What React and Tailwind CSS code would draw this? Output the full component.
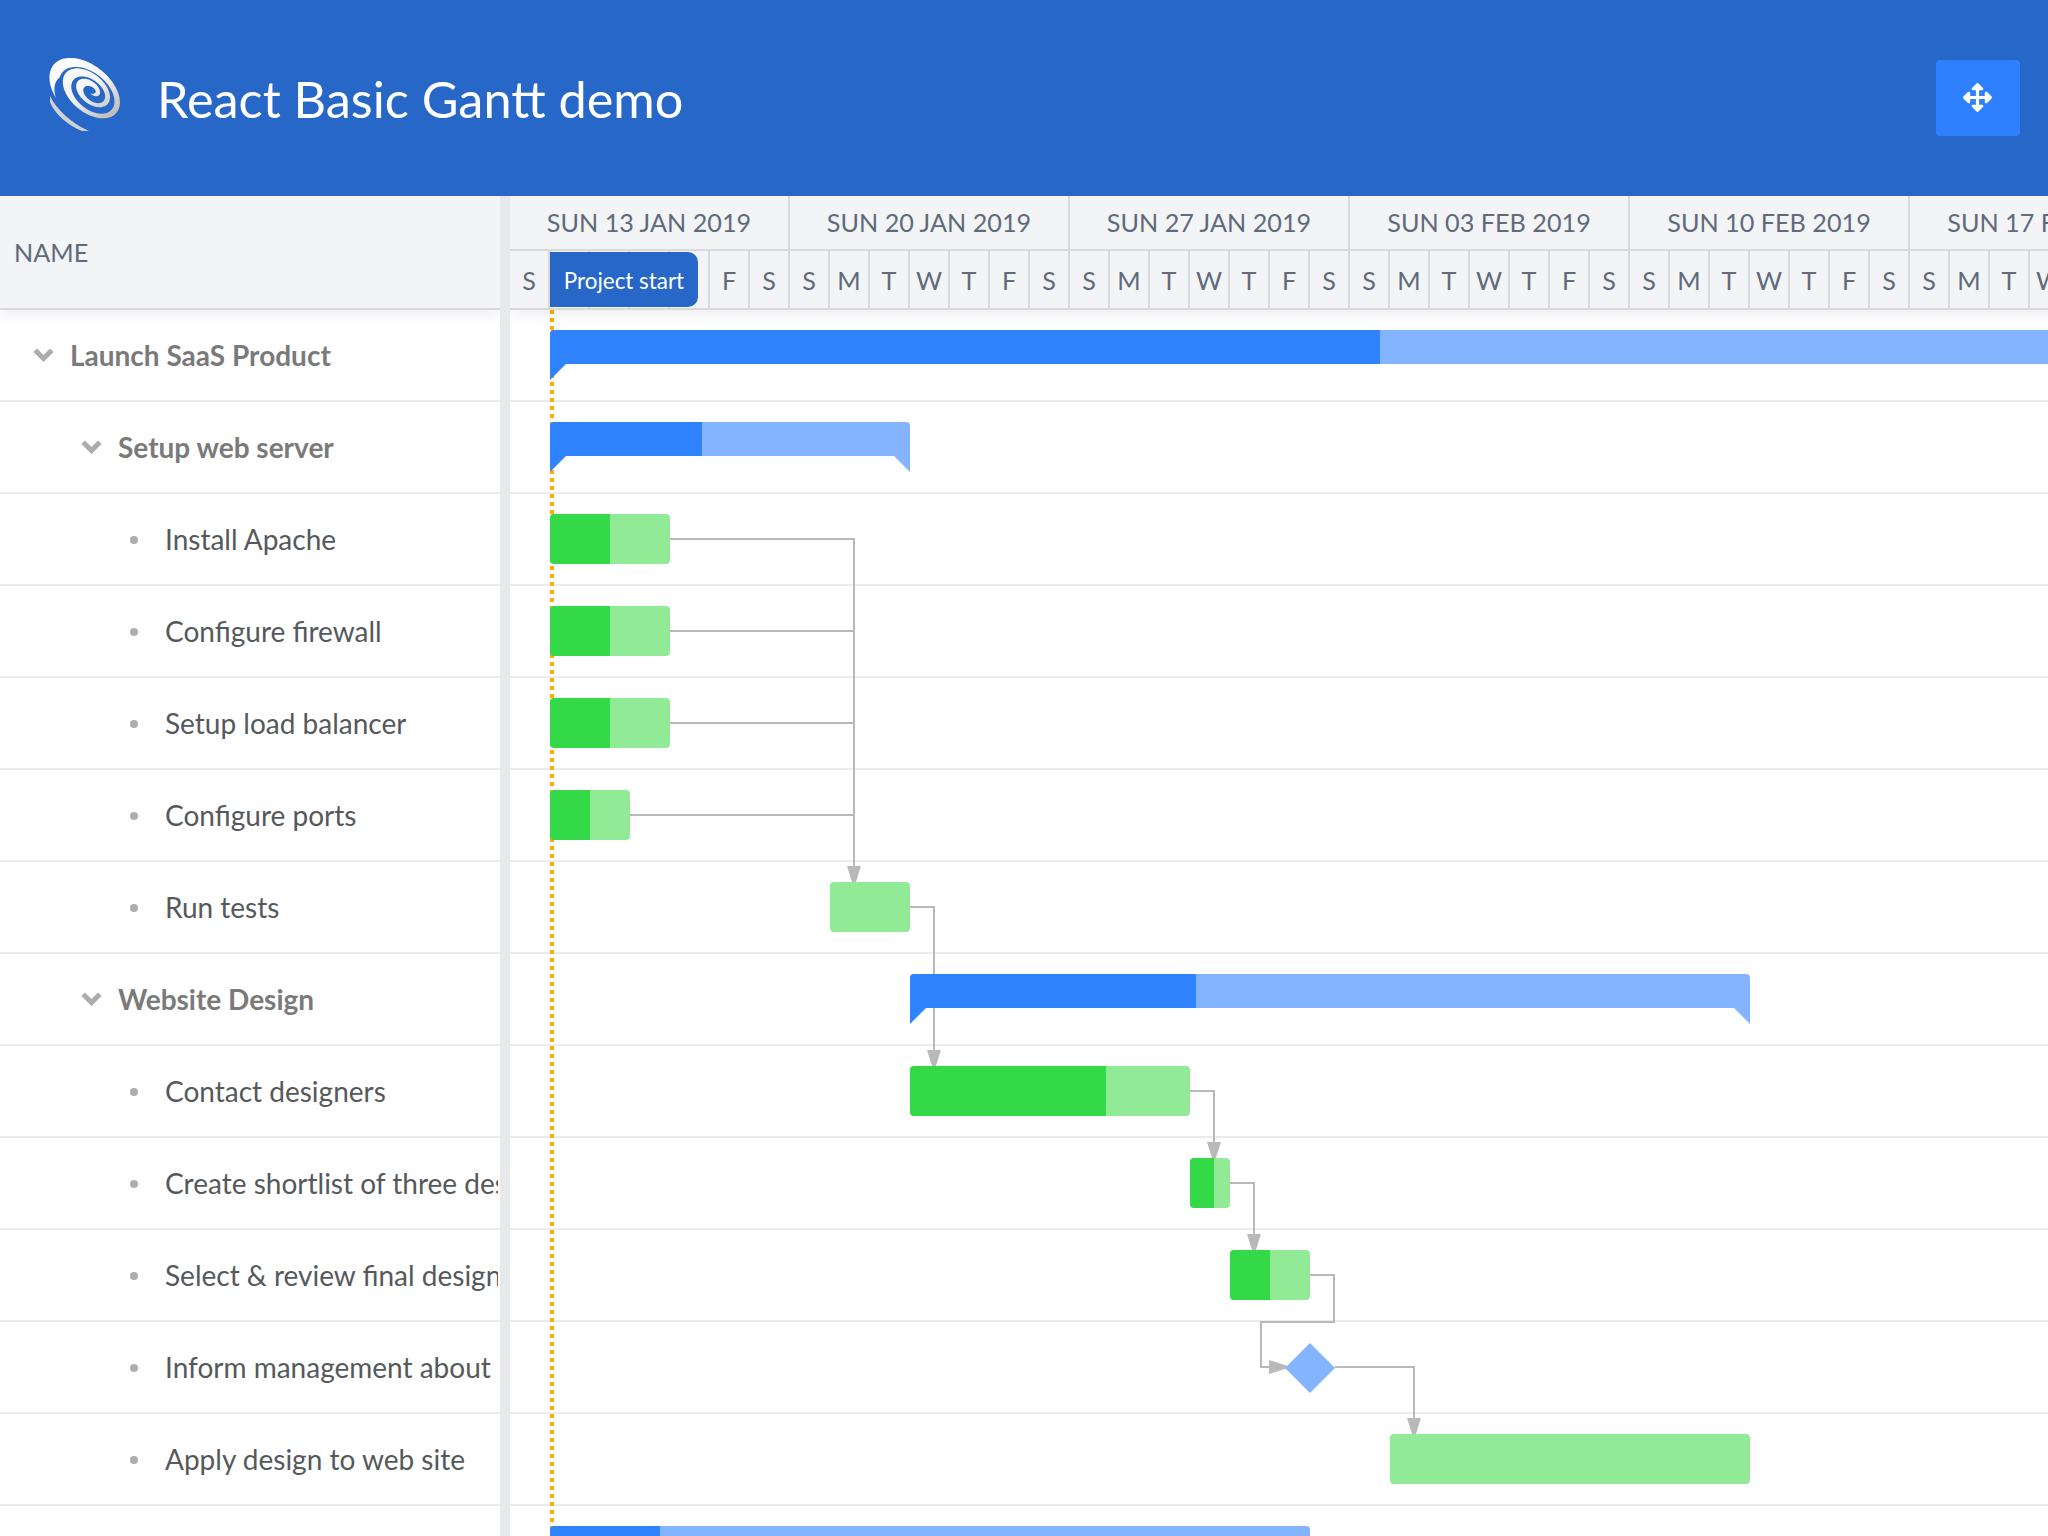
import React from "react";
import { FaArrowsAlt } from "react-icons/fa";

const weeks = ["SUN 13 JAN 2019", "SUN 20 JAN 2019", "SUN 27 JAN 2019", "SUN 03 FEB 2019", "SUN 10 FEB 2019", "SUN 17 FEB 2019"];
const dayNames = ["S", "M", "T", "W", "T", "F", "S"];

const rows = [
  { name: "Launch SaaS Product", level: 0, group: true, bar: { kind: "summary", from: 550, to: 2300, done: 1380 } },
  { name: "Setup web server", level: 1, group: true, bar: { kind: "summary", from: 550, to: 910, done: 702 } },
  { name: "Install Apache", level: 2, bar: { kind: "task", from: 550, to: 670, done: 610 } },
  { name: "Configure firewall", level: 2, bar: { kind: "task", from: 550, to: 670, done: 610 } },
  { name: "Setup load balancer", level: 2, bar: { kind: "task", from: 550, to: 670, done: 610 } },
  { name: "Configure ports", level: 2, bar: { kind: "task", from: 550, to: 630, done: 590 } },
  { name: "Run tests", level: 2, bar: { kind: "task", from: 830, to: 910, done: 830 } },
  { name: "Website Design", level: 1, group: true, bar: { kind: "summary", from: 910, to: 1750, done: 1196 } },
  { name: "Contact designers", level: 2, bar: { kind: "task", from: 910, to: 1190, done: 1106 } },
  { name: "Create shortlist of three designers", level: 2, bar: { kind: "task", from: 1190, to: 1230, done: 1214 } },
  { name: "Select & review final designs", level: 2, bar: { kind: "task", from: 1230, to: 1310, done: 1270 } },
  { name: "Inform management about decision", level: 2, bar: { kind: "milestone", at: 1310 } },
  { name: "Apply design to web site", level: 2, bar: { kind: "task", from: 1390, to: 1750, done: 1390 } },
  { name: "Get CMS licenses", level: 1, group: true, bar: { kind: "summary", from: 550, to: 1310, done: 660 } },
];

const X0 = 510;

function spiralPoints() {
  const a = 45;
  const b = 28;
  const rot = (40 * Math.PI) / 180;
  const turns = 2.9;
  const n = 320;
  const start = 0.32;
  const pt = (t, r) => {
    const th = (start + t) * Math.PI * 2;
    const cx = 42 + 5 * (t / turns);
    const cy = 36 - 1 * (t / turns);
    const x = a * r * Math.cos(th);
    const y = b * r * Math.sin(th);
    return [cx + x * Math.cos(rot) - y * Math.sin(rot), cy + x * Math.sin(rot) + y * Math.cos(rot)];
  };
  const outer = [];
  const inner = [];
  for (let i = 0; i <= n; i++) {
    const t = (i / n) * turns;
    const ro = 1 - 0.3 * t;
    const th = (start + t) * Math.PI * 2;
    const thick = 0.2 + 0.065 * Math.cos(th - Math.PI * 1.05);
    const taperIn = Math.min(1, t / 0.12);
    const taperOut = Math.min(1, (turns - t) / 0.2);
    const w = thick * taperIn * taperOut * (1 - 0.1 * t);
    outer.push(pt(t, ro));
    inner.push(pt(t, ro - w));
  }
  return [...outer, ...inner.reverse()].map((p) => p[0].toFixed(2) + "," + p[1].toFixed(2)).join(" ");
}

function Logo() {
  return (
    <svg width="85" height="80" viewBox="0 0 85 80" className="shrink-0 -mt-[6px]">
      <defs>
        <linearGradient id="lg" x1="0.1" y1="0.05" x2="0.85" y2="0.95">
          <stop offset="0" stopColor="#ffffff" />
          <stop offset="0.55" stopColor="#f4f4f4" />
          <stop offset="1" stopColor="#bfbfbf" />
        </linearGradient>
      </defs>
      <polygon points={spiralPoints()} fill="url(#lg)" />
      <path d="M5 41 C12 55 26 68 44 76 L37 76 C22 70 9 58 5 47 Z" fill="#d2d2d2" />
    </svg>
  );
}

function Chevron() {
  return (
    <svg width="21" height="14" viewBox="0 0 21 14" fill="none" className="shrink-0 text-[#adadad]">
      <path d="M2.2 2.2 L10.5 10.5 L18.8 2.2" stroke="currentColor" strokeWidth="5" />
    </svg>
  );
}

function TreeRow({ row }) {
  const pad = row.group ? (row.level === 0 ? "pl-[33px]" : "pl-[81px]") : "pl-[130px]";
  return (
    <div className={`h-[92px] border-b-2 border-[#ebebeb] flex items-center ${pad} pr-[2px]`}>
      {row.group ? (
        <>
          <Chevron />
          <span className="ml-[16px] text-[28px] font-bold text-[#7a7a7a] whitespace-nowrap overflow-hidden">{row.name}</span>
        </>
      ) : (
        <>
          <span className="w-[8px] h-[8px] rounded-full bg-[#aeaeae] shrink-0 mt-[1px]" />
          <span className="ml-[27px] text-[28px] text-[#55595c] whitespace-nowrap overflow-hidden">{row.name}</span>
        </>
      )}
    </div>
  );
}

function Bar({ bar }) {
  if (bar.kind === "milestone") {
    return (
      <div
        className="absolute top-[21px] w-[50px] h-[50px] bg-[#84b4ff] z-10 [clip-path:polygon(50%_0,100%_50%,50%_100%,0_50%)]"
        style={{ left: bar.at - X0 - 25 }}
      />
    );
  }
  const width = bar.to - bar.from;
  const done = bar.done - bar.from;
  if (bar.kind === "summary") {
    return (
      <div className="absolute top-[20px] z-10" style={{ left: bar.from - X0, width }}>
        <div className="flex h-[34px] rounded-t-[4px] overflow-hidden bg-[#84b4ff]">
          <div className="h-full bg-[#3083ff]" style={{ width: done }} />
        </div>
        <div className="flex justify-between">
          <div className="w-[16px] h-[16px] bg-[#3083ff] [clip-path:polygon(0_0,100%_0,0_100%)]" />
          <div className="w-[16px] h-[16px] bg-[#84b4ff] [clip-path:polygon(0_0,100%_0,100%_100%)]" />
        </div>
      </div>
    );
  }
  return (
    <div
      className="absolute top-[20px] h-[50px] rounded-[4px] overflow-hidden bg-[#90ea96] z-10"
      style={{ left: bar.from - X0, width }}
    >
      <div className="h-full bg-[#34d947]" style={{ width: done }} />
    </div>
  );
}

function Connectors() {
  const c = "#b9b9b9";
  const lines = [
    "M670 539H854V868",
    "M670 631H854",
    "M670 723H854",
    "M630 815H854",
    "M910 907H934V1052",
    "M1190 1091H1214V1144",
    "M1230 1183H1254V1236",
    "M1310 1275H1334V1322H1261V1367H1272",
    "M1335 1367H1414V1420",
  ];
  const heads = [
    "847,866 861,866 854,888",
    "927,1050 941,1050 934,1072",
    "1207,1142 1221,1142 1214,1164",
    "1247,1234 1261,1234 1254,1256",
    "1269,1360 1269,1374 1291,1367",
    "1407,1418 1421,1418 1414,1440",
  ];
  return (
    <svg
      className="absolute left-0 top-0 z-[5]"
      width="1538"
      height="1226"
      viewBox="510 310 1538 1226"
      fill="none"
    >
      {lines.map((d) => (
        <path key={d} d={d} stroke={c} strokeWidth="2" />
      ))}
      {heads.map((p) => (
        <polygon key={p} points={p} fill={c} />
      ))}
    </svg>
  );
}

export default function App() {
  return (
    <div className="w-[2048px] h-[1536px] overflow-hidden bg-white font-[Lato,sans-serif] flex flex-col">
      <header className="h-[196px] shrink-0 bg-[#2767c8] flex items-center pl-[45px] pr-[28px]">
        <Logo />
        <h1 className="ml-[27px] text-[50.4px] leading-none text-white font-normal mt-[3px]">React Basic Gantt demo</h1>
        <button className="ml-auto w-[84px] h-[76px] rounded-[4px] bg-[#2f80ff] flex items-center justify-center text-white">
          <FaArrowsAlt size={29} className="-mt-[2px] -ml-[1px]" />
        </button>
      </header>

      <div className="flex flex-1 min-h-0">
        <aside className="w-[500px] shrink-0 overflow-hidden">
          <div className="h-[114px] bg-[#f3f4f6] border-b-2 border-[#d8d9dc] flex items-center pl-[14px] pt-[2px] text-[25.2px] text-[#5f6b7c] relative z-20 shadow-[0_4px_14px_rgba(0,0,0,0.07)]">
            NAME
          </div>
          {rows.map((r) => (
            <TreeRow key={r.name} row={r} />
          ))}
        </aside>

        <div className="w-[10px] shrink-0 bg-[#e8e9eb] relative z-30" />

        <section className="flex-1 min-w-0 overflow-hidden">
          <div className="h-[114px] bg-[#f3f4f6] border-b-2 border-[#d8d9dc] relative z-20 shadow-[0_4px_14px_rgba(0,0,0,0.07)] w-[1680px]">
            <div className="flex h-[55px] border-b-2 border-[#d8d9dc]">
              {weeks.map((w) => (
                <div
                  key={w}
                  className="w-[280px] shrink-0 border-r-2 border-[#d8d9dc] flex items-center justify-center text-[25.2px] text-[#5f6b7c] whitespace-nowrap"
                >
                  {w}
                </div>
              ))}
            </div>
            <div className="flex h-[57px] relative">
              {weeks.map((w) =>
                dayNames.map((d, i) => (
                  <div
                    key={w + i}
                    className="w-[40px] shrink-0 border-r-2 border-[#d8d9dc] flex items-center justify-center pt-[2px] text-[25.2px] text-[#5f6b7c]"
                  >
                    {d}
                  </div>
                ))
              )}
              <div className="absolute left-[40px] top-[1px] w-[148px] h-[55px] bg-[#2767c8] rounded-r-[10px] flex items-center justify-center pt-[2px] text-[22.4px] text-white whitespace-nowrap">
                Project start
              </div>
            </div>
          </div>

          <div className="relative w-[1538px]">
            <div className="absolute left-[40px] top-0 w-[4px] h-[1226px] z-[2] bg-[repeating-linear-gradient(to_bottom,#ffab00_0,#ffab00_4px,transparent_4px,transparent_8px)]" />
            <Connectors />
            {rows.map((r) => (
              <div key={r.name} className="relative h-[92px] border-b-2 border-[#ebebeb]">
                <Bar bar={r.bar} />
              </div>
            ))}
          </div>
        </section>
      </div>
    </div>
  );
}
